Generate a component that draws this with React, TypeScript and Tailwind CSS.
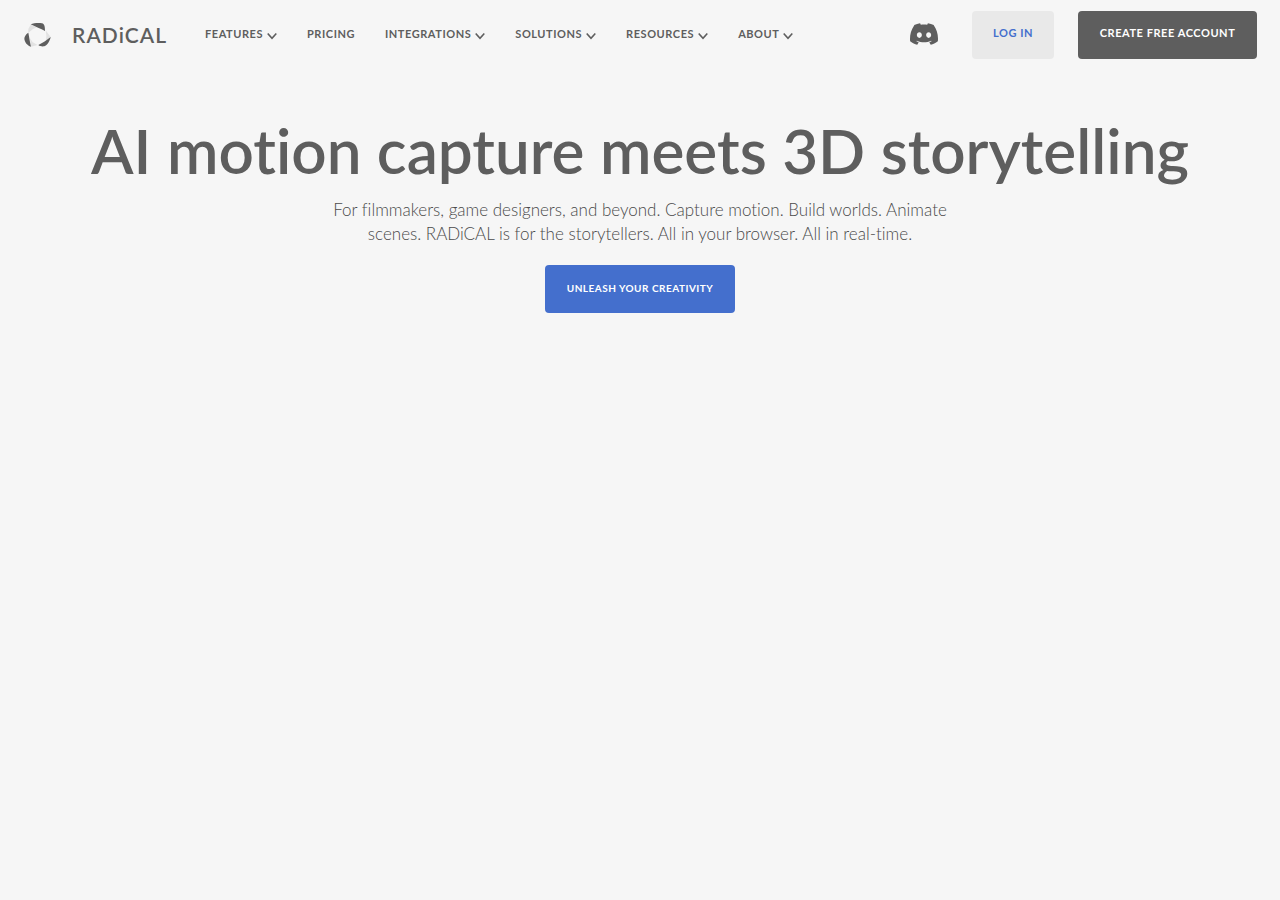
import React from 'react';
import { SiDiscord } from 'react-icons/si';

const navItems = [
  { label: 'Features', menu: true },
  { label: 'Pricing', menu: false },
  { label: 'Integrations', menu: true },
  { label: 'Solutions', menu: true },
  { label: 'Resources', menu: true },
  { label: 'About', menu: true },
];

function LogoMark() {
  return (
    <svg viewBox="0 0 81 72" className="h-6 w-[27px] shrink-0" aria-hidden="true">
      <g fill="#e2e2e2">
        <path d="M20 5 38 13 26 19 13 29 13 18Z" />
        <path d="M65 22 80 42 66 53 67 38Z" />
        <path d="M18 46 26 58 41 66 21 71Z" />
      </g>
      <g fill="#5e5e5e">
        <path d="M20 4C30 0 44-1 54 1C61 3 63 10 63 24C50 17 35 12 20 4Z" />
        <path d="M13 29C5 34 1 41 1 47C2 58 10 67 21 71C18 58 16 45 13 29Z" />
        <path d="M80 42C78 53 70 67 61 70C55 71 47 70 43 66C56 60 68 52 80 42Z" />
      </g>
    </svg>
  );
}

function Chevron() {
  return (
    <svg viewBox="0 0 10 8" className="mt-1 h-2 w-2.5" fill="none" aria-hidden="true">
      <path d="M0.7 1.5 5 6.2 9.3 1.5" stroke="#5e5e5e" strokeWidth="1.6" />
    </svg>
  );
}

function Header() {
  return (
    <header className="flex h-[70px] items-center pl-6 pr-[23px]">
      <a href="#" className="flex w-[181px] shrink-0 items-center gap-[21px]" aria-label="RADiCAL">
        <LogoMark />
        <span className="text-[21px] font-semibold leading-6 tracking-wider">RADiCAL</span>
      </a>

      <nav className="flex items-center gap-[30px] pb-0.5">
        {navItems.map((item) =>
          item.menu ? (
            <button key={item.label} type="button" className="flex items-center gap-1 text-[11px] font-bold uppercase leading-4 tracking-wider">
              {item.label}
              <Chevron />
            </button>
          ) : (
            <a key={item.label} href="#" className="text-[11px] font-bold uppercase leading-4 tracking-wider">
              {item.label}
            </a>
          )
        )}
      </nav>

      <div className="ml-auto flex shrink-0 items-center">
        <a href="#" aria-label="Discord" className="mr-[34px] pb-0.5">
          <SiDiscord size={28} />
        </a>
        <button type="button" className="mr-6 h-12 w-[82px] rounded bg-[#e9e9e9] pb-1 text-[11px] font-bold uppercase tracking-wider text-[#446fcd]">
          Log in
        </button>
        <button type="button" className="h-12 w-[179px] rounded bg-[#5e5e5e] pb-1 text-[11px] font-bold uppercase tracking-wider text-white">
          Create free account
        </button>
      </div>
    </header>
  );
}

function Hero() {
  return (
    <section className="flex flex-col items-center px-6 pt-11 text-center">
      <h1 className="text-[62px] font-semibold leading-[72px]">AI motion capture meets 3D storytelling</h1>
      <p className="mt-3 max-w-[640px] text-[17px] font-light leading-6 text-[#4a4a4a]">
        For filmmakers, game designers, and beyond. Capture motion. Build worlds. Animate
        scenes. RADiCAL is for the storytellers. All in your browser. All in real-time.
      </p>
      <button type="button" className="mt-[19px] h-12 w-[190px] rounded bg-[#446fcd] pb-0.5 text-[10px] font-bold uppercase tracking-wider text-white">
        Unleash your creativity
      </button>
    </section>
  );
}

export default function App() {
  return (
    <div className="min-h-screen bg-[#f6f6f6] font-['Lato',sans-serif] text-[#5e5e5e] [font-variant-ligatures:none]">
      <Header />
      <main>
        <Hero />
      </main>
    </div>
  );
}
